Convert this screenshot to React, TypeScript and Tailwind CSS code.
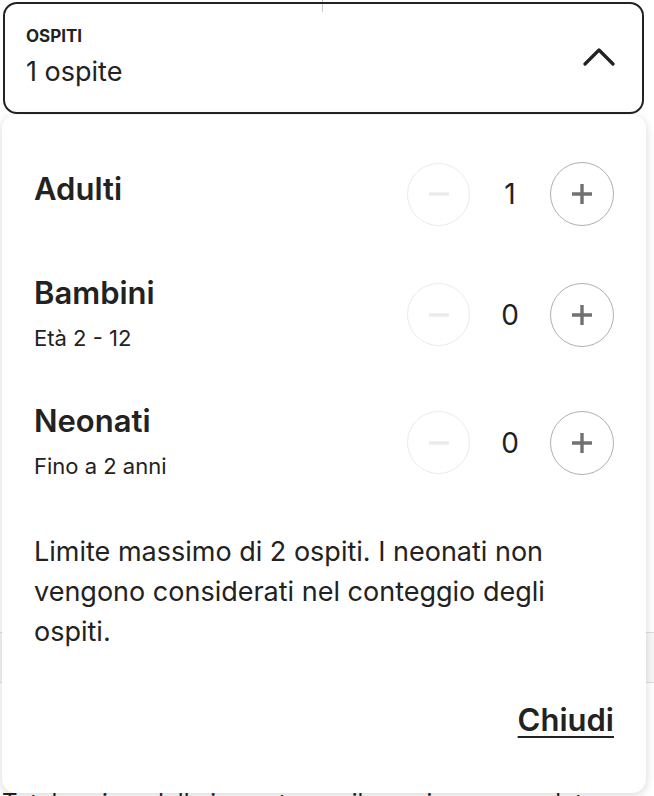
import { useState } from "react";

const FONT = { fontFamily: "Inter, 'Noto Sans', sans-serif" };

type Row = { key: string; title: string; sub?: string; min: number; gap: string };

const ROWS: Row[] = [
	{ key: "adults", title: "Adulti", min: 1, gap: "" },
	{ key: "children", title: "Bambini", sub: "Età 2 - 12", min: 0, gap: "mt-[51px]" },
	{ key: "infants", title: "Neonati", sub: "Fino a 2 anni", min: 0, gap: "mt-[53px]" },
];

function Minus({ disabled }: { disabled: boolean }) {
	return (
		<svg viewBox="0 0 22 22" width={22} height={22} fill="none">
			<path d="M1 11h20" stroke={disabled ? "#ebebeb" : "#717171"} strokeWidth={3.4} />
		</svg>
	);
}

function Plus() {
	return (
		<svg viewBox="0 0 22 22" width={22} height={22} fill="none">
			<path d="M1 11h20M11 1v20" stroke="#717171" strokeWidth={3.4} />
		</svg>
	);
}

function Counter({ value, min, onChange }: { value: number; min: number; onChange: (v: number) => void }) {
	const disabled = value <= min;
	return (
		<div className="flex items-center">
			<button
				onClick={() => !disabled && onChange(value - 1)}
				className={`flex h-[63px] w-[63px] items-center justify-center rounded-full border-[1.5px] ${
					disabled ? "border-[#ebebeb]" : "border-[#b0b0b0]"
				}`}
			>
				<Minus disabled={disabled} />
			</button>
			<span className="w-[80px] text-center text-[28px] leading-[32px] text-[#222222]">{value}</span>
			<button
				onClick={() => onChange(value + 1)}
				className="flex h-[64px] w-[64px] items-center justify-center rounded-full border-[1.5px] border-[#b0b0b0]"
			>
				<Plus />
			</button>
		</div>
	);
}

export default function App() {
	const [counts, setCounts] = useState<Record<string, number>>({ adults: 1, children: 0, infants: 0 });
	const total = counts.adults + counts.children;

	return (
		<div className="relative h-[796px] w-[654px] overflow-hidden bg-white" style={FONT}>
			{/* page behind the popover */}
			<div className="flex h-full flex-col">
				<div className="ml-[322px] h-[12px] w-px shrink-0 bg-[#c8c8c8]" />
				<div className="h-[620px] shrink-0" />
				<div className="h-[51px] shrink-0 border-y border-[#dddddd] bg-[#f7f7f7]" />
				<div className="h-[106px] shrink-0" />
				<p className="shrink-0 whitespace-nowrap pl-[2px] text-[24px] leading-[28px] text-[#222222]">
					Totale prima delle imposte per il soggiorno completo
				</p>
			</div>

			{/* guests picker */}
			<div className="absolute left-0 top-0 w-[647px]">
				<div className="ml-[3px] mr-[3px] mt-[2px] flex h-[112px] items-center justify-between rounded-[14px] border-[2.5px] border-[#222222] pl-[21px] pr-[27px]">
					<div className="flex flex-col pb-[4px]">
						<span className="text-[17px] font-bold leading-[20px] text-[#222222]">OSPITI</span>
						<span className="mt-[12px] text-[27px] leading-[28px] text-[#222222]">
							{total} {total === 1 ? "ospite" : "ospiti"}
						</span>
					</div>
					<svg viewBox="0 0 32 18" width={32} height={18} className="mb-[2px]" fill="none">
						<path d="M2 16L16 2l14 14" stroke="#222222" strokeWidth={3.2} strokeLinecap="round" strokeLinejoin="round" />
					</svg>
				</div>

				<div className="ml-[2px] mr-px mt-px flex h-[678px] flex-col rounded-[14px] bg-white pl-[32px] pr-[32px] pt-[47px] shadow-[0_2px_10px_rgba(0,0,0,0.16)]">
					{ROWS.map((r) => (
						<div key={r.key} className={`flex items-center justify-between ${r.gap}`}>
							<div className={`flex flex-col ${r.sub ? "" : "mb-[10px]"}`}>
								<span className="text-[31px] font-semibold leading-[32px] text-[#222222]">{r.title}</span>
								{r.sub && <span className="mt-[15px] text-[22px] leading-[28px] text-[#222222]">{r.sub}</span>}
							</div>
							<Counter
								value={counts[r.key]}
								min={r.min}
								onChange={(v) => setCounts((c) => ({ ...c, [r.key]: v }))}
							/>
						</div>
					))}

					<p className="mt-[52px] max-w-[545px] text-[27px] leading-[40px] text-[#222222]">
						Limite massimo di 2 ospiti. I neonati non vengono considerati nel conteggio degli ospiti.
					</p>

					<div className="mt-[52px] flex justify-end">
						<button className="text-[31px] font-semibold leading-[32px] text-[#222222] underline underline-offset-[5px] decoration-[2px]">
							Chiudi
						</button>
					</div>
				</div>
			</div>
		</div>
	);
}
